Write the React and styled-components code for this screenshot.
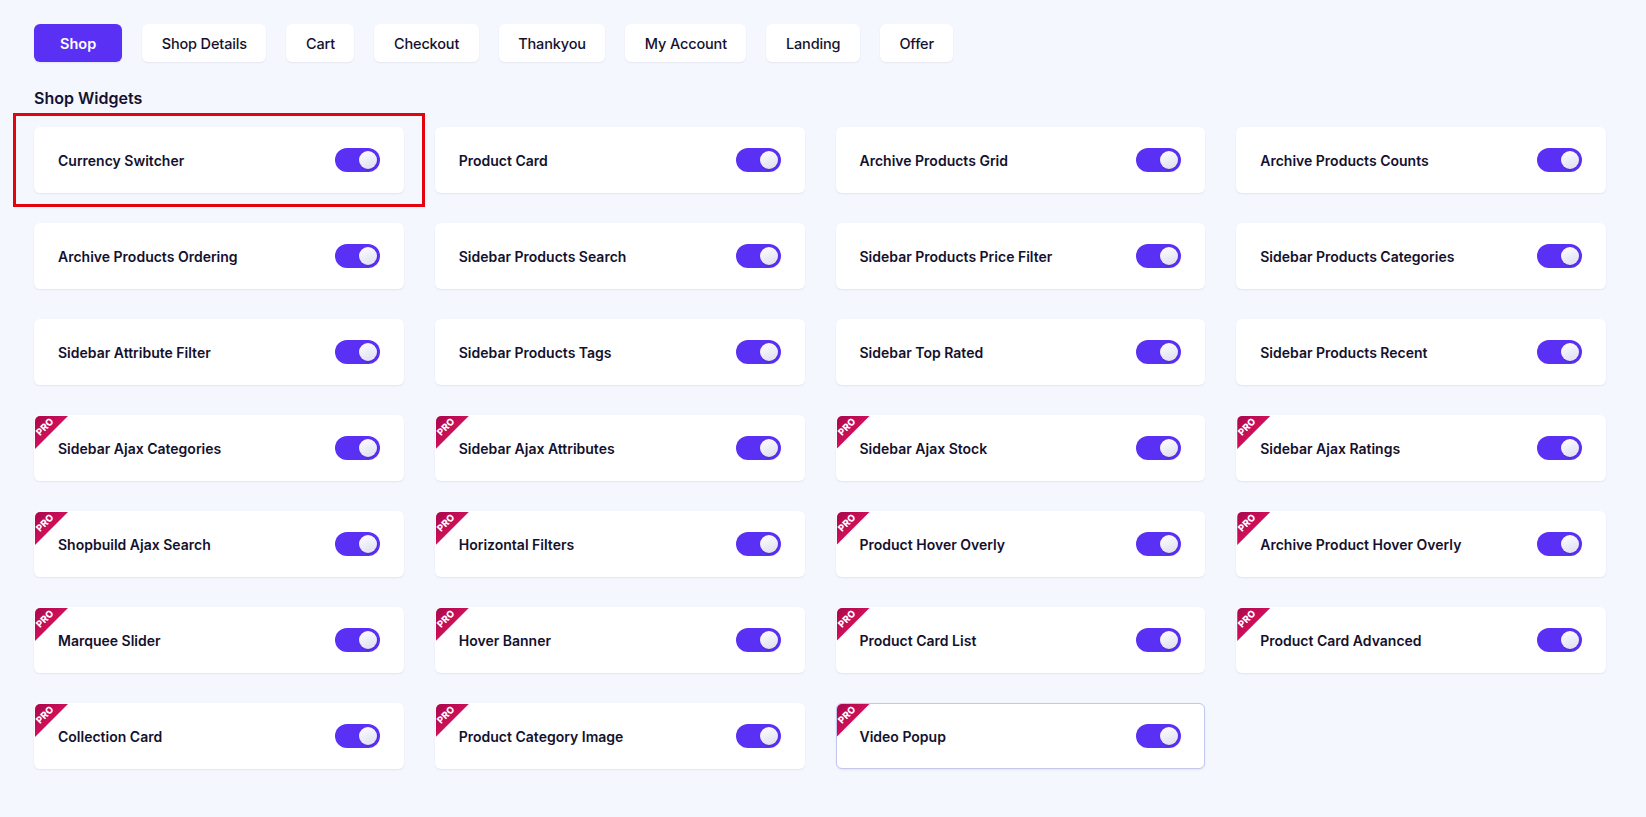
import React, { useState } from 'react'
import styled, { createGlobalStyle } from 'styled-components'

const GlobalStyle = createGlobalStyle`
  * { box-sizing: border-box; }
  body {
    margin: 0;
    background: #f4f7fe;
    font-family: Inter, "Noto Sans", "Liberation Sans", sans-serif;
    color: #14112e;
  }
`

const Page = styled.div`
  padding: 24px 40px 40px 34px;
`

const Tabs = styled.div`
  display: flex;
  gap: 20px;
`

const Tab = styled.button`
  height: 38px;
  padding: 0 ${props => props.active ? '26px' : '19.5px'};
  border: none;
  border-radius: 6px;
  background: ${props => props.active ? '#5b30f5' : '#ffffff'};
  color: ${props => props.active ? '#ffffff' : '#14112e'};
  font-family: inherit;
  font-size: 14.5px;
  letter-spacing: ${props => props.active ? '0' : '-0.15px'};
  font-weight: ${props => props.active ? 600 : 500};
  box-shadow: 0 1px 2px rgba(20, 20, 60, 0.07);
  cursor: pointer;
`

const Heading = styled.h2`
  margin: 26px 0 19px;
  font-size: 16px;
  line-height: 20px;
  font-weight: 600;
  color: #14112e;
`

const Grid = styled.div`
  display: grid;
  grid-template-columns: repeat(4, 1fr);
  column-gap: 31px;
  row-gap: 30px;
`

const Card = styled.div`
  position: relative;
  height: 66px;
  display: flex;
  align-items: center;
  justify-content: space-between;
  padding: 0 23px 0 23px;
  background: #ffffff;
  border-radius: 6px;
  border: 1px solid ${props => props.hovered ? '#c3c6ef' : 'transparent'};
  box-shadow: 0 1px 2px rgba(20, 20, 60, 0.08);
  overflow: hidden;
`

const Highlight = styled.div`
  position: relative;

  &::after {
    content: '';
    position: absolute;
    top: -14px;
    bottom: -14px;
    left: -21px;
    right: -21px;
    border: 3px solid #e2040f;
    pointer-events: none;
  }
`

const Label = styled.span`
  font-size: 14px;
  font-weight: 600;
  color: #14112e;
`

const ProRibbon = styled.div`
  position: absolute;
  top: 0;
  left: 0;
  width: 33px;
  height: 33px;
  background: linear-gradient(135deg, #a8074a 0%, #d3105c 55%, #e0145f 100%);
  clip-path: polygon(0 0, 100% 0, 0 100%);
`

const ProText = styled.span`
  position: absolute;
  top: 6px;
  left: -5px;
  width: 30px;
  line-height: 10px;
  text-align: center;
  transform: rotate(-45deg);
  font-size: 9.5px;
  font-weight: 800;
  color: #ffffff;
`

const Track = styled.button`
  position: relative;
  flex: none;
  width: 45px;
  height: 24px;
  padding: 0;
  border: none;
  border-radius: 12px;
  background: ${props => props.on ? '#5b30f5' : '#c9cbe0'};
  cursor: pointer;
`

const Knob = styled.span`
  position: absolute;
  top: 3px;
  left: ${props => props.on ? '24px' : '3px'};
  width: 18px;
  height: 18px;
  border-radius: 50%;
  background: linear-gradient(160deg, #ffffff 0%, #dcdcf0 100%);
  box-shadow: 0 1px 2px rgba(0, 0, 0, 0.15);
  transition: left 0.15s;
`

const tabs = ['Shop', 'Shop Details', 'Cart', 'Checkout', 'Thankyou', 'My Account', 'Landing', 'Offer']

const widgets = [
  { name: 'Currency Switcher', highlight: true },
  { name: 'Product Card' },
  { name: 'Archive Products Grid' },
  { name: 'Archive Products Counts' },
  { name: 'Archive Products Ordering' },
  { name: 'Sidebar Products Search' },
  { name: 'Sidebar Products Price Filter' },
  { name: 'Sidebar Products Categories' },
  { name: 'Sidebar Attribute Filter' },
  { name: 'Sidebar Products Tags' },
  { name: 'Sidebar Top Rated' },
  { name: 'Sidebar Products Recent' },
  { name: 'Sidebar Ajax Categories', pro: true },
  { name: 'Sidebar Ajax Attributes', pro: true },
  { name: 'Sidebar Ajax Stock', pro: true },
  { name: 'Sidebar Ajax Ratings', pro: true },
  { name: 'Shopbuild Ajax Search', pro: true },
  { name: 'Horizontal Filters', pro: true },
  { name: 'Product Hover Overly', pro: true },
  { name: 'Archive Product Hover Overly', pro: true },
  { name: 'Marquee Slider', pro: true },
  { name: 'Hover Banner', pro: true },
  { name: 'Product Card List', pro: true },
  { name: 'Product Card Advanced', pro: true },
  { name: 'Collection Card', pro: true },
  { name: 'Product Category Image', pro: true },
  { name: 'Video Popup', pro: true, hovered: true },
]

function Toggle({ on, onClick }) {
  return (
    <Track on={on ? 1 : 0} onClick={onClick}>
      <Knob on={on ? 1 : 0} />
    </Track>
  )
}

function WidgetCard({ widget, on, onToggle }) {
  const card = (
    <Card hovered={widget.hovered ? 1 : 0}>
      {widget.pro && (
        <ProRibbon>
          <ProText>PRO</ProText>
        </ProRibbon>
      )}
      <Label>{widget.name}</Label>
      <Toggle on={on} onClick={onToggle} />
    </Card>
  )
  return widget.highlight ? <Highlight>{card}</Highlight> : card
}

export default function App() {
  const [active, setActive] = useState('Shop')
  const [enabled, setEnabled] = useState(() => widgets.map(() => true))

  const toggle = (i) => {
    setEnabled(prev => prev.map((v, j) => (j === i ? !v : v)))
  }

  return (
    <>
      <GlobalStyle />
      <Page>
        <Tabs>
          {tabs.map(t => (
            <Tab key={t} active={t === active ? 1 : 0} onClick={() => setActive(t)}>
              {t}
            </Tab>
          ))}
        </Tabs>
        <Heading>Shop Widgets</Heading>
        <Grid>
          {widgets.map((w, i) => (
            <WidgetCard key={w.name} widget={w} on={enabled[i]} onToggle={() => toggle(i)} />
          ))}
        </Grid>
      </Page>
    </>
  )
}
